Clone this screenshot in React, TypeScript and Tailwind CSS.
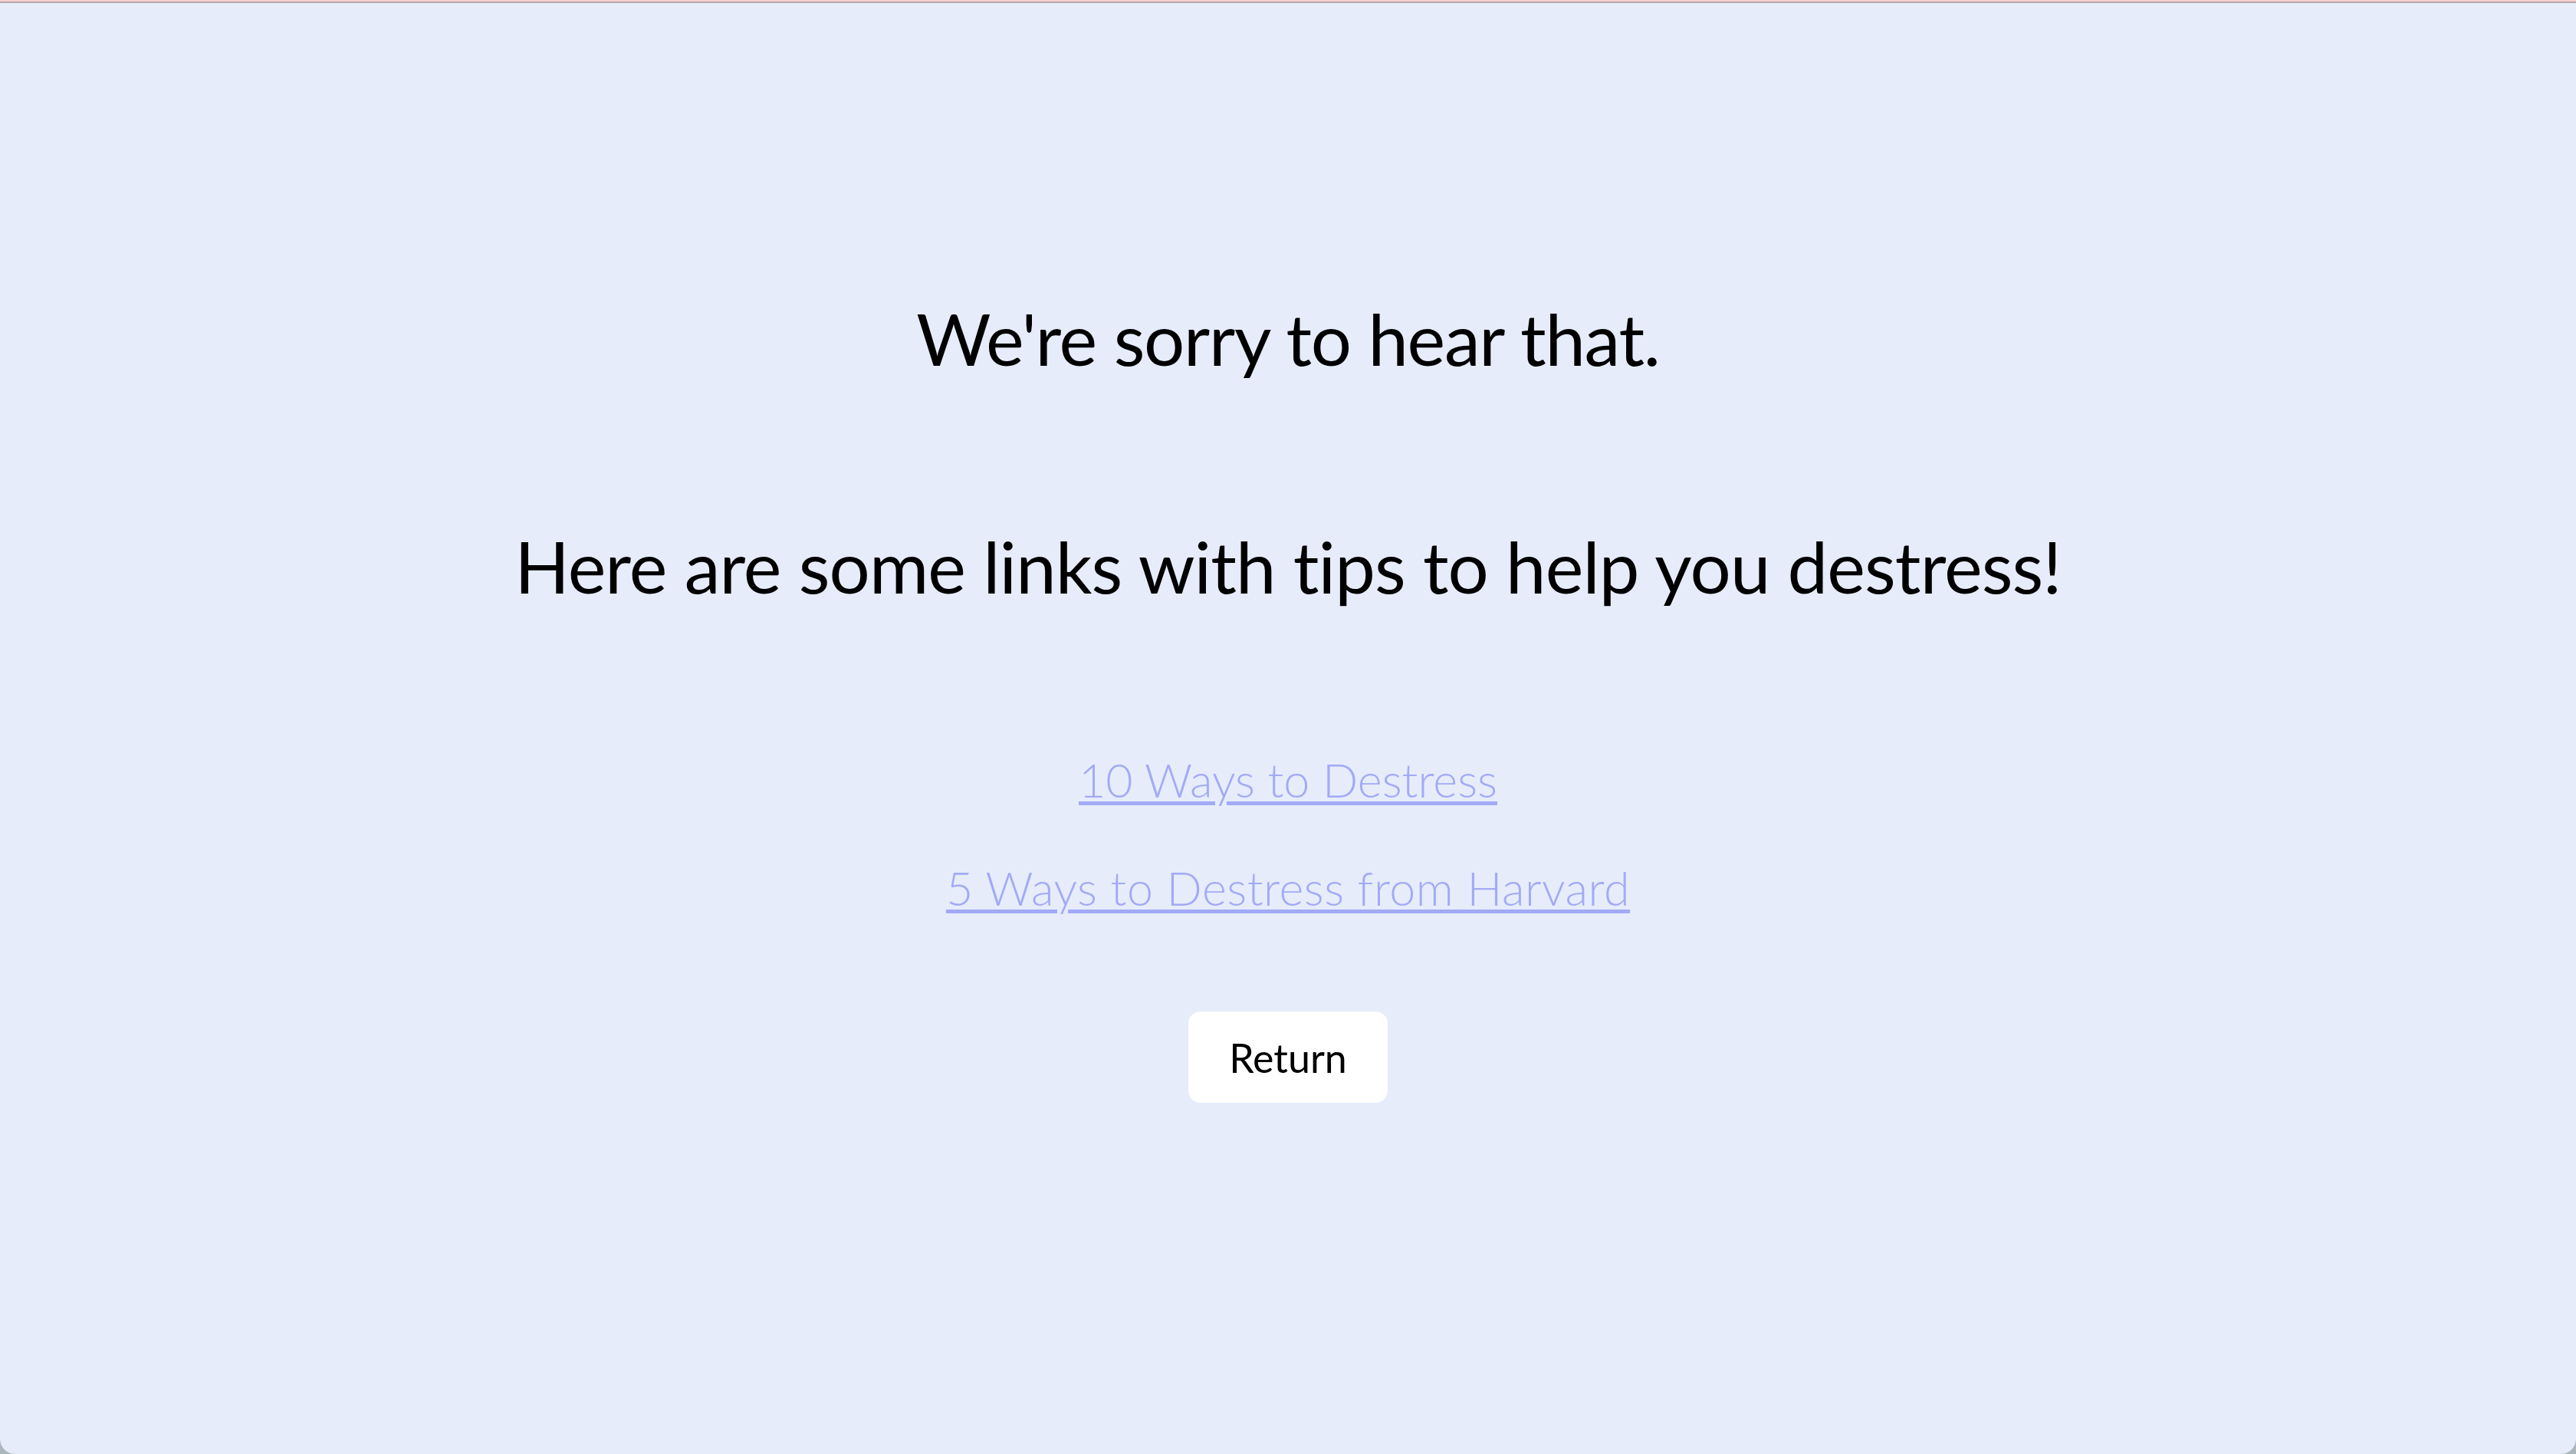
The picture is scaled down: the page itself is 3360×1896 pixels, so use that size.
import React from "react";

export default function App() {
  return (
    <div className="flex h-[1896px] w-full flex-col bg-[#aab7bb] font-['Lato',sans-serif]">
      <div className="h-[2px] w-full bg-[#f8cfd2]" />
      <div className="h-[2px] w-full bg-[#b9a6a9]" />
      <main className="flex flex-1 flex-col items-center rounded-b-[20px] bg-[#e6ecfa] pt-[381px] text-black">
        <h1 className="text-[94px] leading-[112px] font-normal tracking-[-1.3px]">We're sorry to hear that.</h1>
        <h2 className="mt-[185px] text-[94px] leading-[112px] font-normal tracking-[-0.9px]">
          Here are some links with tips to help you destress!
        </h2>
        <div className="mt-[186px] flex flex-col items-center gap-[67px]">
          <a
            href="#"
            className="text-[61px] leading-[74px] font-light text-[#a2aaf6] underline decoration-[5px] underline-offset-[5px]"
          >
            10 Ways to Destress
          </a>
          <a
            href="#"
            className="text-[61px] leading-[74px] font-light tracking-[0.5px] text-[#a2aaf6] underline decoration-[5px] underline-offset-[5px]"
          >
            5 Ways to Destress from Harvard
          </a>
        </div>
        <button
          type="button"
          className="mt-[124px] flex h-[119px] w-[260px] items-center justify-center rounded-[16px] bg-white text-[52px] leading-[62px] font-normal text-black"
        >
          Return
        </button>
      </main>
    </div>
  );
}
